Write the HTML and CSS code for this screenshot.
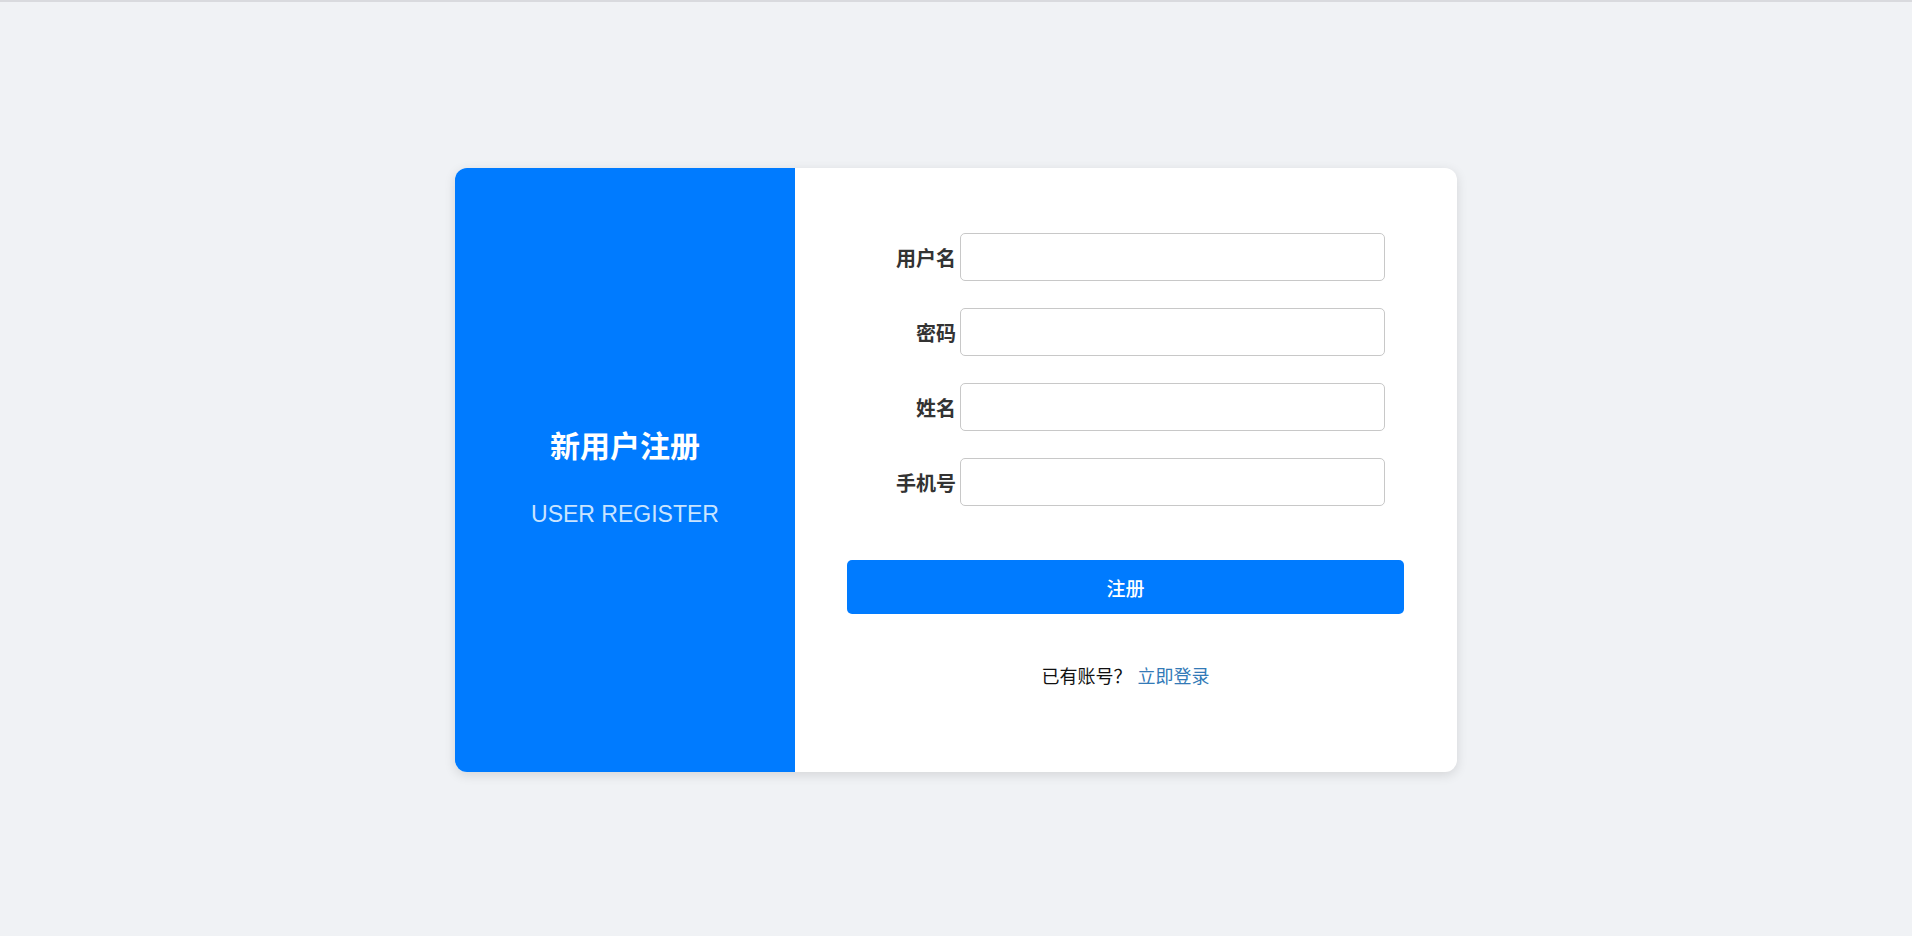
FILE: index.html
```html
<!DOCTYPE html>
<html lang="zh-CN">
<head>
<meta charset="utf-8">
<title>新用户注册</title>
<link rel="stylesheet" href="styles.css">
</head>
<body>
<div class="page">
  <div class="card">
    <div class="side">
      <h2 class="side-title">新用户注册</h2>
      <p class="side-sub">USER REGISTER</p>
    </div>
    <div class="main">
      <form class="form">
        <div class="row">
          <label class="label">用户名</label>
          <input class="input" type="text">
        </div>
        <div class="row">
          <label class="label">密码</label>
          <input class="input" type="password">
        </div>
        <div class="row">
          <label class="label">姓名</label>
          <input class="input" type="text">
        </div>
        <div class="row">
          <label class="label">手机号</label>
          <input class="input" type="text">
        </div>
        <button class="btn" type="button">注册</button>
      </form>
      <p class="foot">已有账号？<a class="link" href="#">立即登录</a></p>
    </div>
  </div>
</div>
</body>
</html>
```

FILE: styles.css
```css
* { box-sizing: border-box; }
html, body { margin: 0; padding: 0; height: 100%; }
body {
  background: #f0f2f5;
  font-family: "Liberation Sans", "Noto Sans CJK SC", sans-serif;
  color: #333;
  border-top: 2px solid #d9dade;
  padding-top: 2px;
}
.page {
  height: 100%;
  display: flex;
  align-items: center;
  justify-content: center;
}
.card {
  width: 1002px;
  height: 604px;
  display: flex;
  background: #fff;
  border-radius: 12px;
  overflow: hidden;
  box-shadow: 0 3px 12px rgba(0, 0, 0, 0.12);
}
.side {
  width: 340px;
  flex: none;
  background: #007bff;
  display: flex;
  flex-direction: column;
  align-items: center;
  justify-content: center;
  padding-top: 14px;
}
.side-title {
  margin: 0 0 38px;
  font-size: 30px;
  line-height: 36px;
  font-weight: 700;
  color: #fff;
  font-family: "Noto Sans CJK SC", sans-serif;
}
.side-sub {
  margin: 0;
  font-size: 23px;
  line-height: 28px;
  color: #c9e4ff;
  font-family: "Liberation Sans", Arial, sans-serif;
}
.main {
  flex: 1;
  padding: 65px 53px 0 52px;
  display: flex;
  flex-direction: column;
}
.form {
  display: flex;
  flex-direction: column;
}
.row {
  display: flex;
  align-items: center;
  margin-bottom: 27px;
}
.row:nth-child(4) { margin-bottom: 0; }
.label {
  width: 113px;
  padding-right: 4px;
  text-align: right;
  font-size: 20px;
  font-weight: 700;
  color: #333;
  font-family: "Noto Sans CJK SC", sans-serif;
}
.input {
  width: 425px;
  height: 48px;
  border: 1px solid #c8c8c8;
  border-radius: 5px;
  background: #fff;
  outline: none;
  font-size: 18px;
  padding: 0 10px;
}
.btn {
  margin-top: 54px;
  height: 54px;
  width: 100%;
  border: none;
  border-radius: 5px;
  background: #007bff;
  color: #fff;
  font-size: 19px;
  font-weight: 500;
  font-family: "Noto Sans CJK SC", sans-serif;
}
.foot {
  margin: 48px 0 0;
  text-align: center;
  font-size: 18px;
  line-height: 27px;
  color: #111;
  font-family: "Noto Sans CJK SC", sans-serif;
}
.link {
  color: #337ab7;
  text-decoration: none;
  margin-left: 6px;
}
```
